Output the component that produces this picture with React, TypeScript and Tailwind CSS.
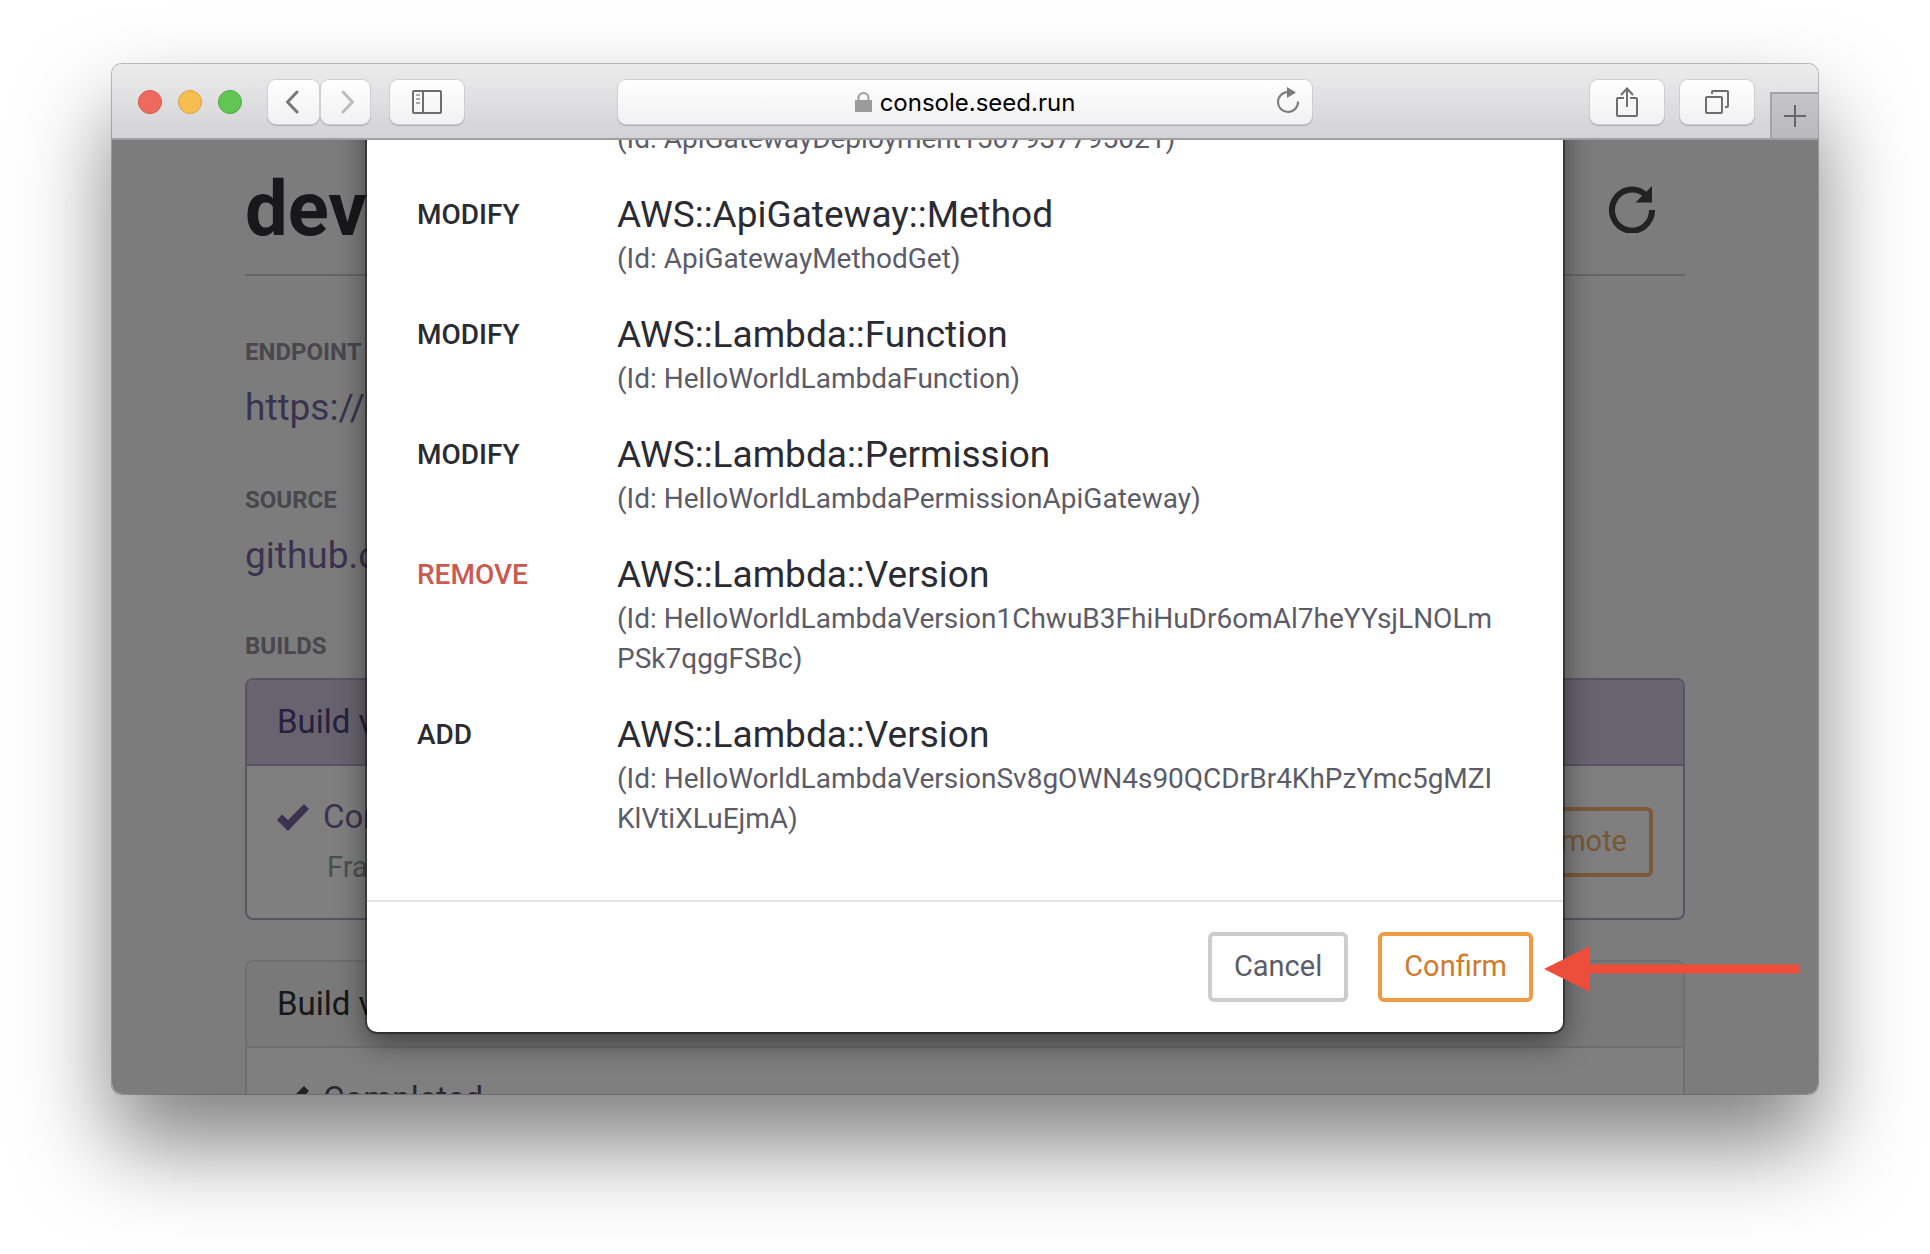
import type { ReactNode } from "react";

type Change = {
  action: "MODIFY" | "REMOVE" | "ADD";
  type: string;
  id: string;
};

const changes: Change[] = [
  {
    action: "MODIFY",
    type: "AWS::ApiGateway::Deployment",
    id: "ApiGatewayDeployment1507937795021",
  },
  {
    action: "MODIFY",
    type: "AWS::ApiGateway::Method",
    id: "ApiGatewayMethodGet",
  },
  {
    action: "MODIFY",
    type: "AWS::Lambda::Function",
    id: "HelloWorldLambdaFunction",
  },
  {
    action: "MODIFY",
    type: "AWS::Lambda::Permission",
    id: "HelloWorldLambdaPermissionApiGateway",
  },
  {
    action: "REMOVE",
    type: "AWS::Lambda::Version",
    id: "HelloWorldLambdaVersion1ChwuB3FhiHuDr6omAl7heYYsjLNOLmPSk7qggFSBc",
  },
  {
    action: "ADD",
    type: "AWS::Lambda::Version",
    id: "HelloWorldLambdaVersionSv8gOWN4s90QCDrBr4KhPzYmc5gMZIKlVtiXLuEjmA",
  },
];

const ToolbarButton = ({
  label,
  className,
  children,
}: {
  label: string;
  className: string;
  children: ReactNode;
}) => (
  <button
    type="button"
    aria-label={label}
    className={`flex h-11 items-center justify-center rounded-lg bg-linear-to-b from-white to-[#f1f1f1] shadow-[0_0_0_1px_#cfcfd1,0_1px_0_1px_#b0b0b2] ${className}`}
  >
    {children}
  </button>
);

const Toolbar = () => (
  <header className="flex h-19 shrink-0 items-center rounded-t-[10px] border-b-2 border-[#a0a0a2] bg-linear-to-b from-[#ececed] to-[#d3d3d5] pt-0.5">
    <div className="flex flex-1 items-center">
      <div className="ml-[26px] flex gap-4">
        <span className="size-6 rounded-full border border-[#d5554b] bg-[#ee6a5f]" />
        <span className="size-6 rounded-full border border-[#dba03c] bg-[#f6be50]" />
        <span className="size-6 rounded-full border border-[#4ca93f] bg-[#62c655]" />
      </div>
      <div className="ml-[26px] flex gap-0.5">
        <ToolbarButton label="Back" className="w-[51px] pr-1">
          <svg width="14" height="24" viewBox="0 0 14 24" fill="none">
            <path d="M12 2 2.500 12 12 22" stroke="#777" strokeWidth="3" strokeLinecap="round" strokeLinejoin="round" />
          </svg>
        </ToolbarButton>
        <ToolbarButton label="Forward" className="w-[49px] pl-1">
          <svg width="14" height="24" viewBox="0 0 14 24" fill="none">
            <path d="M2 2 11.500 12 2 22" stroke="#bdbdbd" strokeWidth="3" strokeLinecap="round" strokeLinejoin="round" />
          </svg>
        </ToolbarButton>
      </div>
      <ToolbarButton label="Show sidebar" className="ml-5 w-[74px]">
        <svg width="30" height="24" viewBox="0 0 30 24" fill="none" stroke="#6e6e6e">
          <rect x="1" y="1" width="28" height="22" rx="1" strokeWidth="2" />
          <path d="M11 1v22" strokeWidth="2" />
          <path d="M4 5h4M4 9h4M4 13h4" strokeWidth="1.500" stroke="#8e8e8e" />
        </svg>
      </ToolbarButton>
    </div>

    <div className="flex h-11 w-full max-w-[694px] items-center rounded-lg bg-linear-to-b from-white to-[#f1f1f1] pr-3 pl-9 shadow-[0_0_0_1px_#cfcfd1,0_1px_0_1px_#b0b0b2]">
      <div className="flex flex-1 items-center justify-center gap-2">
        <svg width="17" height="20" viewBox="0 0 17 20" fill="none">
          <path d="M3.500 9V6a5 5 0 0 1 10 0v3" stroke="#9b9b9b" strokeWidth="2" />
          <path d="M0 8h17v12H0z" fill="#9b9b9b" />
        </svg>
        <span className="pt-0.5 font-[Inter,sans-serif] text-2xl text-black">
          console.seed.run
        </span>
      </div>
      <button type="button" aria-label="Reload page" className="pb-0.5">
        <svg width="24" height="28" viewBox="0 0 24 28" fill="none">
          <path d="M22 14.500A10 10 0 1 1 12 5" stroke="#7b7b7b" strokeWidth="2" />
          <path d="M11 0l9 5.500-9 5.500z" fill="#7b7b7b" />
        </svg>
      </button>
    </div>

    <div className="flex flex-1 items-center justify-end gap-4 self-stretch">
      <ToolbarButton label="Share" className="w-[74px]">
        <svg width="22" height="30" viewBox="0 0 22 30" fill="none" stroke="#6e6e6e" strokeWidth="2">
          <path d="M8 11H2a1 1 0 0 0-1 1v16a1 1 0 0 0 1 1h18a1 1 0 0 0 1-1V12a1 1 0 0 0-1-1h-6" />
          <path d="M11 20V2M5 8l6-6.500L17 8" />
        </svg>
      </ToolbarButton>
      <ToolbarButton label="Show all tabs" className="w-[74px]">
        <svg width="24" height="24" viewBox="0 0 24 24" fill="none" stroke="#6e6e6e" strokeWidth="2">
          <rect x="1" y="7" width="16" height="16" rx="1" />
          <path d="M7 4V2a1 1 0 0 1 1-1h14a1 1 0 0 1 1 1v14a1 1 0 0 1-1 1h-2" />
        </svg>
      </ToolbarButton>
      <button
        type="button"
        aria-label="New tab"
        className="flex h-[46px] w-12 items-center justify-center self-end border-t-2 border-l-2 border-[#a4a4a6] bg-linear-to-b from-[#c6c6c8] to-[#b9b9bb]"
      >
        <svg width="22" height="22" viewBox="0 0 22 22" stroke="#666" strokeWidth="2">
          <path d="M11 0v22M0 11h22" />
        </svg>
      </button>
    </div>
  </header>
);

const CheckIcon = ({ className }: { className: string }) => (
  <svg width="32" height="27" viewBox="0 0 32 27" className={className}>
    <path d="M0 16l5-5.500 6 5.500L27 0l5 5-21 22z" fill="currentColor" />
  </svg>
);

const Field = ({ label, value }: { label: string; value: string }) => (
  <section className="mb-[52px]">
    <h2 className="text-2xl font-bold text-[#8e8e9a]">{label}</h2>
    <a href="#" className="mt-4 block text-[37px] leading-12 text-[#74669e]">
      {value}
    </a>
  </section>
);

const StagePage = () => (
  <div className="mx-auto w-full max-w-[1440px]">
    <div className="flex items-center justify-between border-b-2 border-[#ccc] pt-[29px] pr-[30px] pb-[25px]">
      <h1 className="text-[76px] leading-20 font-bold text-[#303034]">dev</h1>
      <button type="button" aria-label="Refresh">
        <svg width="46" height="47" viewBox="0 0 46 47" fill="none">
          <path d="M43 24A20 20.500 0 1 1 37 9.500" stroke="#444" strokeWidth="6" />
          <path d="M43 0v16.500H26.500z" fill="#444" />
        </svg>
      </button>
    </div>

    <div className="pt-[60px]">
      <Field label="ENDPOINT" value="https://api.seed.run/dev" />
      <Field label="SOURCE" value="github.com/seed" />

      <h2 className="-mt-0.5 text-2xl font-bold text-[#8e8e9a]">BUILDS</h2>

      <article className="mt-4 rounded-lg border-2 border-[#aea8cc] bg-white">
        <h3 className="rounded-t-md border-b-2 border-[#aea8cc] bg-[#cec8de] px-[30px] py-[22px] text-[33px] leading-10 text-[#4e427c]">
          Build v2
        </h3>
        <div className="flex items-center justify-between px-[30px] py-[31px]">
          <div>
            <div className="flex items-center gap-[14px] text-[33px] leading-10 text-[#74669e]">
              <CheckIcon className="text-[#74669e]" />
              Completed
            </div>
            <p className="mt-2.5 pl-[50px] text-[29px] leading-10 text-[#969e9c]">
              Frank
            </p>
          </div>
          <button
            type="button"
            className="h-[70px] rounded-md border-4 border-[#f4b476] px-[22px] text-[29px] text-[#f0ae70]"
          >
            Promote
          </button>
        </div>
      </article>

      <article className="mt-10 rounded-lg border-2 border-[#dedede] bg-white">
        <h3 className="rounded-t-md border-b-2 border-[#dedede] bg-[#f3f3f3] px-[30px] py-[22px] text-[33px] leading-10 text-[#303034]">
          Build v1
        </h3>
        <div className="px-[30px] py-[31px]">
          <div className="flex items-center gap-[14px] text-[33px] leading-10 text-[#56525f]">
            <CheckIcon className="text-[#444]" />
            Completed
          </div>
        </div>
      </article>
    </div>
  </div>
);

const ChangeRow = ({ change }: { change: Change }) => (
  <li className="flex">
    <span
      className={`w-[200px] shrink-0 text-[28px] leading-12 font-medium ${
        change.action === "REMOVE" ? "text-[#cb5a50]" : "text-[#2b2b33]"
      }`}
    >
      {change.action}
    </span>
    <div className="min-w-0 flex-1 pr-2">
      <h3 className="text-[37px] leading-12 text-[#2b2b33]">{change.type}</h3>
      <p className="text-[28px] leading-10 break-all text-[#5c5c68]">
        (Id: {change.id})
      </p>
    </div>
  </li>
);

const ConfirmDialog = () => (
  <div
    role="dialog"
    aria-label="Confirm change set"
    className="mx-auto w-full max-w-[1196px] rounded-b-[10px] bg-white shadow-[0_0_0_2px_rgba(0,0,0,0.4),0_10px_30px_rgba(0,0,0,0.5)]"
  >
    {/* scrolled down, so the first change is cut off by the toolbar */}
    <ul className="-mt-[69px] flex flex-col gap-8 px-[50px] pb-[61px]">
      {changes.map((change) => (
        <ChangeRow key={change.id} change={change} />
      ))}
    </ul>
    <footer className="flex justify-end gap-[30px] border-t-2 border-[#e4e4e4] p-[30px]">
      <button
        type="button"
        className="h-[70px] rounded-md border-4 border-[#ccc] px-[22px] text-[29px] text-[#5c5c68]"
      >
        Cancel
      </button>
      <div className="relative">
        <button
          type="button"
          className="h-[70px] rounded-md border-4 border-[#f09a42] px-[22px] text-[29px] text-[#d27a2c]"
        >
          Confirm
        </button>
        <svg
          width="255"
          height="46"
          viewBox="0 0 255 46"
          className="absolute top-3.5 left-full ml-[11px]"
        >
          <path d="M0 23 46 0v18.500h209v9H46V46z" fill="#ee4d3c" />
        </svg>
      </div>
    </footer>
  </div>
);

const App = () => {
  return (
    <div className="flex h-screen flex-col overflow-hidden bg-white px-28 pt-16 pb-40 font-[Roboto,sans-serif]">
      <div className="flex min-h-0 flex-1 flex-col rounded-[10px] shadow-[0_0_0_1px_rgba(0,0,0,0.25),0_50px_90px_rgba(0,0,0,0.5)]">
        <Toolbar />
        <main className="relative min-h-0 flex-1 overflow-hidden rounded-b-[10px] bg-[#f9f9f9]">
          <StagePage />
          <div className="absolute inset-0 overflow-hidden bg-black/50">
            <ConfirmDialog />
          </div>
        </main>
      </div>
    </div>
  );
};

export default App;
